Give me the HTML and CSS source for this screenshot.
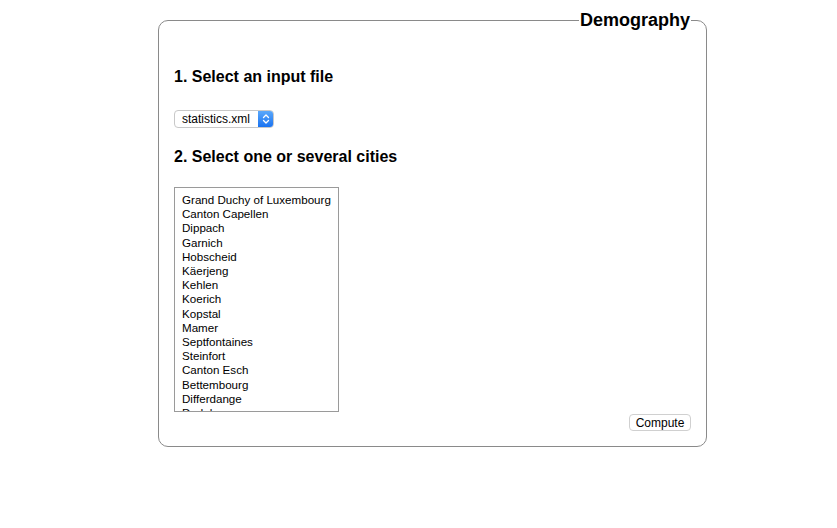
FILE: index.html
```html
<!DOCTYPE html>
<html>
<head>
<meta charset="utf-8">
<link rel="stylesheet" href="styles.css">
</head>
<body>
<fieldset class="panel">
  <legend class="legend">Demography</legend>
  <h2 class="step">1. Select an input file</h2>
  <div class="select">
    <span class="select-label">statistics.xml</span>
    <span class="select-arrow">
      <svg width="8" height="12" viewBox="0 0 8 12"><path d="M1.5 4.5 L4 2 L6.5 4.5 M1.5 7.5 L4 10 L6.5 7.5" fill="none" stroke="#fff" stroke-width="1.3" stroke-linecap="round" stroke-linejoin="round"/></svg>
    </span>
  </div>
  <h2 class="step step-two">2. Select one or several cities</h2>
  <div class="listbox">
    <div class="option">Grand Duchy of Luxembourg</div>
    <div class="option">Canton Capellen</div>
    <div class="option">Dippach</div>
    <div class="option">Garnich</div>
    <div class="option">Hobscheid</div>
    <div class="option">Käerjeng</div>
    <div class="option">Kehlen</div>
    <div class="option">Koerich</div>
    <div class="option">Kopstal</div>
    <div class="option">Mamer</div>
    <div class="option">Septfontaines</div>
    <div class="option">Steinfort</div>
    <div class="option">Canton Esch</div>
    <div class="option">Bettembourg</div>
    <div class="option">Differdange</div>
    <div class="option">Dudelange</div>
  </div>
  <div class="actions">
    <button class="button">Compute</button>
  </div>
</fieldset>
</body>
</html>
```
FILE: styles.css
```css
html, body {
  margin: 0;
  padding: 0;
  background: #fff;
  font-family: "Liberation Sans", Arial, sans-serif;
  color: #000;
}
.panel {
  margin: 10px 0 0 158px;
  width: 549px;
  box-sizing: border-box;
  height: 437px;
  border: 1px solid #8a8a8a;
  border-radius: 10px;
  padding: 0 15px 0 15px;
  display: flow-root;
}
.legend {
  margin-left: auto;
  margin-right: 0;
  padding: 0 1px;
  font-weight: bold;
  font-size: 18px;
  line-height: 21px;
}
.step {
  font-size: 16px;
  font-weight: bold;
  margin: 36px 0 0 0;
  line-height: 19px;
}
.step-two {
  margin-top: 19px;
}
.select {
  margin-top: 24px;
  width: 100px;
  height: 18px;
  box-sizing: border-box;
  border: 1px solid #c8c8c8;
  border-radius: 4px;
  display: flex;
  align-items: stretch;
  font-size: 12px;
  overflow: hidden;
  background: #fff;
}
.select-label {
  flex: 1;
  padding-left: 7px;
  line-height: 16px;
}
.select-arrow {
  width: 15px;
  background: linear-gradient(#5aa8fb, #1a73f1);
  display: flex;
  align-items: center;
  justify-content: center;
}
.listbox {
  margin-top: 21px;
  width: 165px;
  height: 225px;
  box-sizing: border-box;
  border: 1px solid #9a9a9a;
  overflow: hidden;
  padding: 5px 0 0 7px;
  font-size: 11.6px;
}
.option {
  line-height: 14.2px;
  white-space: nowrap;
}
.actions {
  display: flex;
  justify-content: flex-end;
  margin-top: 2px;
}
.button {
  font-family: "Liberation Sans", Arial, sans-serif;
  font-size: 12px;
  height: 17px;
  width: 62px;
  padding: 0;
  background: #fff;
  border: 1px solid #d0d0d0;
  border-radius: 4px;
  color: #000;
}
```
